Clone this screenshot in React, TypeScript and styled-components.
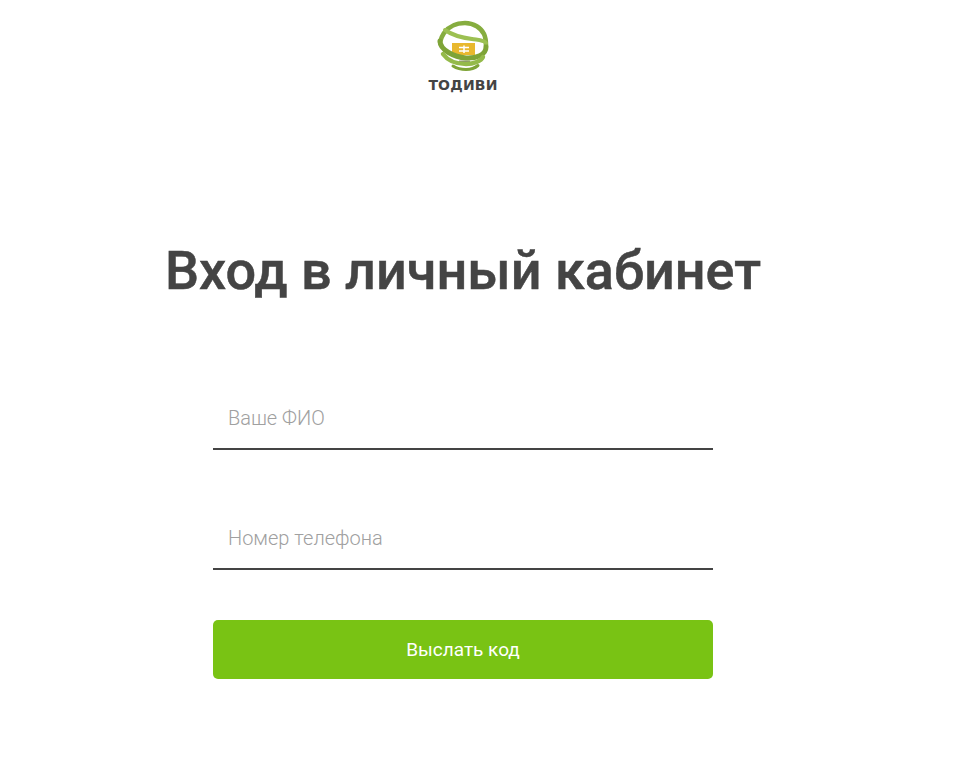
import styled, { createGlobalStyle } from 'styled-components';

const GlobalStyle = createGlobalStyle`
  html, body {
    margin: 0;
    padding: 0;
    background: #fff;
  }
  body {
    font-family: Roboto, "Liberation Sans", sans-serif;
    color: #444;
  }
`;

const Logo = () => (
  <LogoWrap>
    <svg width="58" height="54" viewBox="0 0 58 54" fill="none">
      <rect x="18" y="24" width="23" height="12" fill="#e8b82e" />
      <path d="M25 28.500h10M25 32h10M30 26.500v7.500" stroke="#fff" strokeWidth="1.5" />
      <path d="M25 42.300h11" stroke="#8d8d78" strokeWidth="1.5" />
      <path d="M6 23C7 19 8 17 10 14 15 7 22 4 31 4c9 0 16 5 19 11 1.500 3 2 7 2 12" stroke="#86ad3f" strokeWidth="4.600" strokeLinecap="round" />
      <path d="M11 11c7 5 19 8 27 9 6 1 12 1 14 4" stroke="#9cc052" strokeWidth="4" strokeLinecap="round" />
      <path d="M6 22c0 9 14 16 26 17 10 .5 20-3 20-11" stroke="#7ea437" strokeWidth="5" strokeLinecap="round" />
      <path d="M9 35c5 7 14 10 23 10 8 0 15-3 17-7" stroke="#94ba4a" strokeWidth="4.400" strokeLinecap="round" />
      <path d="M19 47c4 2.500 8 3.500 13 3.500 5 0 9-1.500 12-4" stroke="#7ea437" strokeWidth="3" strokeLinecap="round" />
    </svg>
    <LogoText>ТОДИВИ</LogoText>
  </LogoWrap>
);

export default function App() {
  return (
    <>
      <GlobalStyle />
      <Page>
        <Logo />
        <Title>Вход в личный кабинет</Title>
        <Form>
          <Field placeholder="Ваше ФИО" />
          <Field placeholder="Номер телефона" />
          <Submit type="button">Выслать код</Submit>
        </Form>
      </Page>
    </>
  );
}

const Page = styled.div`
  width: 926px;
  min-height: 759px;
  padding-top: 19px;
  box-sizing: border-box;
  display: flex;
  flex-direction: column;
  align-items: center;
`;

const LogoWrap = styled.div`
  display: flex;
  flex-direction: column;
  align-items: center;
`;

const LogoText = styled.span`
  font-family: "DejaVu Sans", sans-serif;
  font-weight: 700;
  font-size: 14px;
  line-height: 14px;
  margin-top: 5px;
  color: #444;
  letter-spacing: 0.2px;
`;

const Title = styled.h1`
  margin: 146px 0 0;
  font-family: Roboto, sans-serif;
  font-weight: 500;
  font-size: 54px;
  line-height: 66px;
  color: #444;
  -webkit-text-stroke: 0.5px #444;
  white-space: nowrap;
`;

const Form = styled.form`
  width: 500px;
  margin-top: 86px;
  display: flex;
  flex-direction: column;
`;

const Field = styled.input`
  height: 60px;
  padding: 0 15px 2px;
  margin-bottom: 60px;
  box-sizing: border-box;
  border: none;
  border-bottom: 2px solid #444;
  outline: none;
  background: transparent;
  font-family: Roboto, sans-serif;
  font-weight: 300;
  font-size: 20px;
  color: #444;

  &::placeholder {
    color: #a0a0a0;
    opacity: 1;
  }

  &:nth-of-type(2) {
    margin-bottom: 50px;
  }
`;

const Submit = styled.button`
  height: 59px;
  border: none;
  border-radius: 5px;
  background: #79c314;
  color: #fff;
  font-family: Roboto, sans-serif;
  font-weight: 400;
  font-size: 19px;
  cursor: pointer;
`;
